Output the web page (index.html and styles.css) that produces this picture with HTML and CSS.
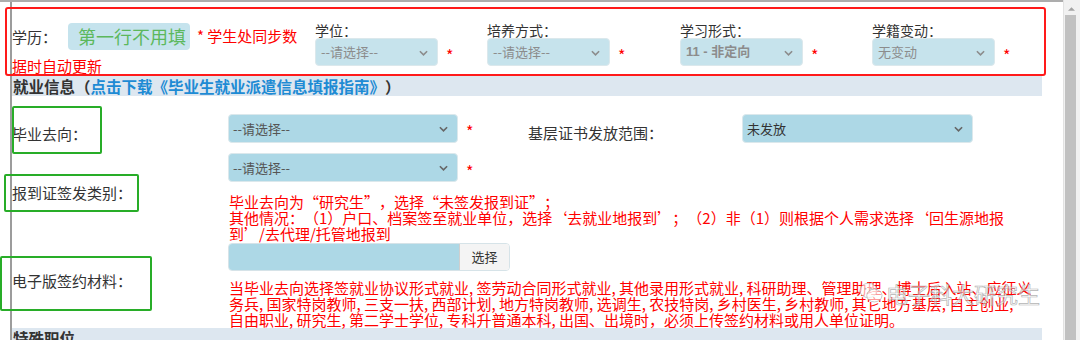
FILE: index.html
```html
<!DOCTYPE html>
<html lang="zh-CN">
<head>
<meta charset="utf-8">
<link rel="stylesheet" href="styles.css">
</head>
<body>
<div class="screen">
  <div class="page">
    <div class="frame">
      <div class="row-top">
        <div class="edu">
          <div class="edu-line">
            <span class="edu-lbl">学历：</span>
            <span class="fake-input">第一行不用填</span>
            <span class="edu-note">* 学生处同步数</span>
          </div>
          <div class="edu-note edu-wrap">据时自动更新</div>
        </div>
        <div class="field f1">
          <div class="flbl">学位：</div>
          <div class="ctl"><div class="sel dis">--请选择--<svg class="chev" viewBox="0 0 10 6"><polyline points="1,1 5,5 9,1"/></svg></div><span class="star">*</span></div>
        </div>
        <div class="field f2">
          <div class="flbl">培养方式：</div>
          <div class="ctl"><div class="sel dis">--请选择--<svg class="chev" viewBox="0 0 10 6"><polyline points="1,1 5,5 9,1"/></svg></div><span class="star">*</span></div>
        </div>
        <div class="field f3">
          <div class="flbl">学习形式：</div>
          <div class="ctl"><div class="sel dis bold">11 - 非定向<svg class="chev" viewBox="0 0 10 6"><polyline points="1,1 5,5 9,1"/></svg></div><span class="star">*</span></div>
        </div>
        <div class="field f4">
          <div class="flbl">学籍变动：</div>
          <div class="ctl"><div class="sel dis">无变动<svg class="chev" viewBox="0 0 10 6"><polyline points="1,1 5,5 9,1"/></svg></div><span class="star">*</span></div>
        </div>
      </div>

      <div class="sec-head">就业信息（<a class="link">点击下载《毕业生就业派遣信息填报指南》</a>）</div>

      <div class="form">
        <div class="lab lab1">毕业去向：</div>
        <div class="cnt c1">
          <div class="sel big">--请选择--<svg class="chev" viewBox="0 0 10 6"><polyline points="1,1 5,5 9,1"/></svg></div>
          <span class="star">*</span>
          <span class="lab2">基层证书发放范围：</span>
          <div class="sel big sel2">未发放<svg class="chev" viewBox="0 0 10 6"><polyline points="1,1 5,5 9,1"/></svg></div>
        </div>

        <div class="lab">报到证签发类别：</div>
        <div class="cnt c2">
          <div class="ctl">
            <div class="sel big">--请选择--<svg class="chev" viewBox="0 0 10 6"><polyline points="1,1 5,5 9,1"/></svg></div>
            <span class="star">*</span>
          </div>
          <p class="note">毕业去向为“研究生”，选择“未签发报到证”；<br>其他情况：（1）户口、档案签至就业单位，选择‘去就业地报到’；（2）非（1）则根据个人需求选择‘回生源地报<br>到’/去代理/托管地报到</p>
        </div>

        <div class="lab lab3">电子版签约材料：</div>
        <div class="cnt c3">
          <div class="file"><span class="file-box"></span><span class="file-btn">选择</span></div>
          <p class="note para">当毕业去向选择签就业协议形式就业, 签劳动合同形式就业, 其他录用形式就业, 科研助理、管理助理、博士后入站、应征义<br>务兵, 国家特岗教师, 三支一扶, 西部计划, 地方特岗教师, 选调生, 农技特岗, 乡村医生, 乡村教师, 其它地方基层, 自主创业,<br>自由职业, 研究生, 第二学士学位, 专科升普通本科, 出国、出境时，必须上传签约材料或用人单位证明。</p>
        </div>
      </div>

      <div class="sec-head">特殊职位</div>
    </div>

    <div class="mark-red"></div>
    <div class="mark-green g1"></div>
    <div class="mark-green g2"></div>
    <div class="mark-green g3"></div>

    <div class="watermark">
      <svg class="wm-icon" viewBox="0 0 30 26">
        <ellipse cx="12" cy="10" rx="10" ry="8.5"/>
        <ellipse cx="19" cy="16" rx="9" ry="7.5"/>
        <circle cx="8.5" cy="8" r="1.2" class="dot"/>
        <circle cx="15" cy="8" r="1.2" class="dot"/>
      </svg>
      <span class="wm-text">电子科大研究生</span>
    </div>
  </div>

  <div class="scrollbar">
    <svg class="sb-arrow" viewBox="0 0 8 5"><polygon points="0,5 4,1 8,5"/></svg>
    <div class="sb-thumb"></div>
  </div>
</div>
</body>
</html>
```

FILE: styles.css
```css
* { box-sizing: border-box; }
html, body { margin: 0; padding: 0; background: #fff; }
body {
  font-family: "Noto Sans CJK SC", "Noto Sans", sans-serif;
  color: #333;
  text-spacing-trim: space-all;
}

.screen {
  display: flex;
  width: 1080px;
  height: 340px;
  overflow: hidden;
}

.page {
  position: relative;
  width: 1063px;
  height: 340px;
  border-top: 2px solid #adadad;
  overflow: hidden;
}

.frame {
  margin-left: 10px;
  width: 1032px;
  height: 338px;
  border-left: 2px solid #9c9c9c;
}

/* top row */
.row-top {
  display: flex;
  align-items: flex-start;
  height: 74px;
  padding-top: 20px;
}
.edu { width: 303px; }
.edu-line {
  display: flex;
  align-items: center;
  height: 28px;
}
.edu-lbl {
  width: 56px;
  font-size: 15px;
  line-height: 18px;
  padding-top: 2px;
  color: #333;
}
.fake-input {
  width: 122px;
  height: 27px;
  border-radius: 4px;
  background: #c5e3ed;
  color: #5cb85c;
  font-size: 18px;
  line-height: 27px;
  padding-left: 10px;
  white-space: nowrap;
}
.edu-note {
  margin-left: 7px;
  color: #ff0000;
  font-size: 15px;
  line-height: 16px;
  white-space: nowrap;
}
.edu-wrap {
  margin: 8px 0 0 0;
}

.field { display: flex; flex-direction: column; }
.f1 { width: 172px; }
.f2 { width: 193px; }
.f3 { width: 192px; }
.f4 { width: 170px; }
.flbl {
  font-size: 14px;
  line-height: 16px;
  height: 16px;
  color: #333;
}
.ctl { display: flex; align-items: center; }

.sel {
  position: relative;
  width: 123px;
  height: 28px;
  border-radius: 4px;
  border: 1px solid #dbe8ec;
  background: #add8e6;
  font-size: 13px;
  line-height: 26px;
  padding-left: 5px;
  color: #444;
  white-space: nowrap;
}
.sel.dis {
  background: #c6e3ec;
  color: #8c8c8c;
}
.sel.bold {
  font-family: "Liberation Sans", "Noto Sans CJK SC", sans-serif;
  font-weight: bold;
}
.chev {
  position: absolute;
  right: 9px;
  top: 11px;
  width: 9px;
  height: 6px;
  fill: none;
  stroke: #666;
  stroke-width: 1.8;
}
.sel.dis .chev { stroke: #8c8c8c; }

.star {
  display: inline-block;
  width: 10px;
  margin-left: 8px;
  margin-top: 6px;
  color: #ff0000;
  font-size: 16px;
  line-height: 16px;
}

/* section headers */
.sec-head {
  width: 1030px;
  height: 20px;
  background: #dde7f0;
  font-size: 15.5px;
  line-height: 20px;
  font-weight: bold;
  color: #333;
  padding-left: 1px;
  white-space: nowrap;
  overflow: hidden;
}
.link { color: #1e8bd4; }

/* form */
.form {
  display: grid;
  grid-template-columns: 216px 1fr;
  padding-top: 17px;
  width: 1030px;
}
.lab {
  align-self: center;
  font-size: 15px;
  line-height: 18px;
  color: #333;
  white-space: nowrap;
}
.lab1 { padding-top: 12px; }
.lab3 { margin-bottom: 9px; }

.cnt { display: flex; flex-direction: column; }
.c1 { flex-direction: row; align-items: center; }
.sel.big {
  width: 230px;
  height: 29px;
  line-height: 27px;
  padding-left: 4px;
  color: #555;
}
.lab2 {
  margin-left: 52px;
  width: 214px;
  font-size: 15px;
  line-height: 18px;
  color: #333;
  padding-top: 10px;
}
.sel.sel2 { width: 231px; color: #333; }

.c2 { margin-top: 10px; }
.note {
  margin: 12px 0 0 1px;
  color: #ff0000;
  font-size: 15px;
  line-height: 16px;
  white-space: nowrap;
}

.c3 { margin-top: 1px; }
.file {
  display: flex;
  width: 282px;
  height: 28px;
  border-radius: 4px;
  overflow: hidden;
  border: 1px solid #d6e3e8;
}
.file-box { flex: 1; background: #add8e6; }
.file-btn {
  width: 50px;
  background: #f4f4f4;
  border-left: 1px solid #cfcfcf;
  font-size: 13px;
  line-height: 26px;
  text-align: center;
  color: #333;
}
.note.para { margin-top: 9px; }

/* annotation overlays */
.mark-red {
  position: absolute;
  left: 5px;
  top: 5px;
  width: 1041px;
  height: 69px;
  border: 2px solid #ff1a1a;
  border-radius: 3px;
}
.mark-green {
  position: absolute;
  border: 2px solid #28ad28;
  border-radius: 2px;
}
.g1 { left: 12px; top: 104px; width: 90px; height: 48px; }
.g2 { left: 4px; top: 172px; width: 135px; height: 38px; }
.g3 { left: 0; top: 254px; width: 152px; height: 55px; }

.watermark {
  position: absolute;
  left: 858px;
  top: 278px;
  display: flex;
  align-items: center;
  opacity: 0.85;
}
.wm-icon {
  width: 26px;
  height: 22px;
  fill: rgba(255,255,255,0.7);
  stroke: #b5b5b5;
  stroke-width: 1;
}
.wm-icon .dot { fill: #b5b5b5; stroke: none; }
.wm-text {
  margin-left: 2px;
  font-size: 22px;
  line-height: 26px;
  color: rgba(255,255,255,0.55);
  -webkit-text-stroke: 0.7px #a8a8a8;
  white-space: nowrap;
}

/* scrollbar */
.scrollbar {
  width: 17px;
  height: 340px;
  border-left: 1px solid #e2e2e2;
  background: #f1f1f1;
  display: flex;
  flex-direction: column;
  align-items: flex-start;
}
.sb-arrow {
  width: 7px;
  height: 5px;
  margin: 6px 0 0 4px;
  fill: #a3a3a3;
}
.sb-thumb {
  width: 11px;
  margin-top: 4px;
  margin-left: 1px;
  flex: 1;
  background: #c1c1c1;
}
```
